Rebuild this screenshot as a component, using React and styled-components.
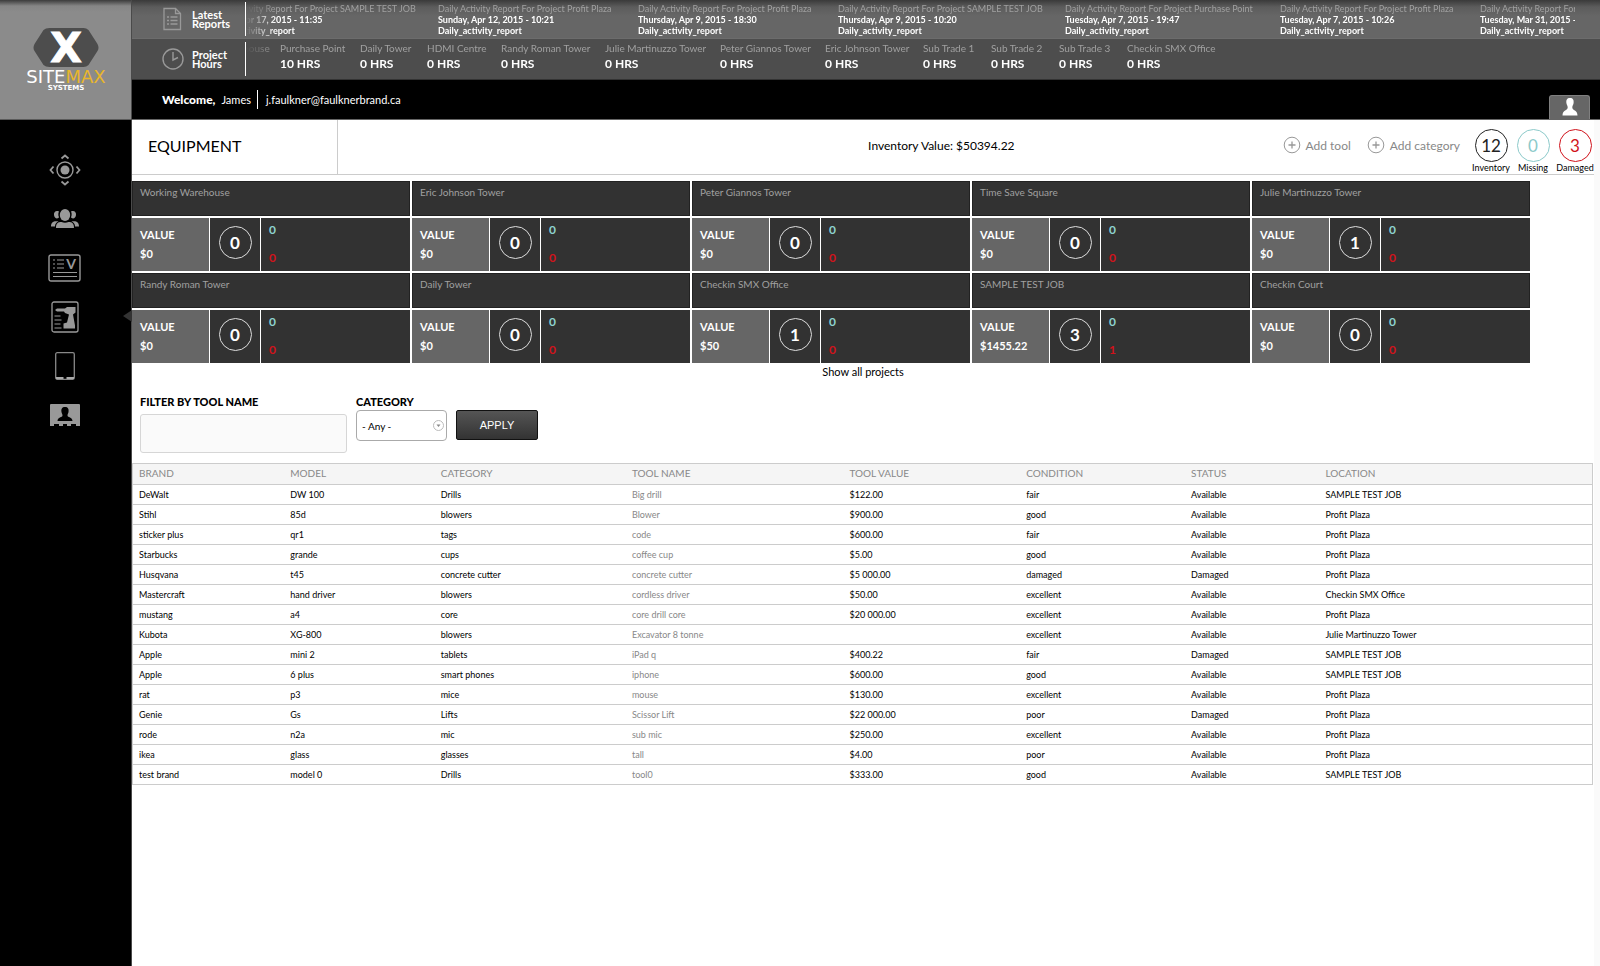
import { useState } from "react";
import styled, { createGlobalStyle, css } from "styled-components";

const GlobalStyle = createGlobalStyle`
* {
  box-sizing: border-box;
}
body {
  margin: 0;
  background: #fafafa;
  color: #000;
  font-family: Lato, "Open Sans", sans-serif;
  font-size: 12px;
}
button, input, select {
  font-family: inherit;
  margin: 0;
}
`

const Page = styled.div`
display: flex;
min-height: 100vh;
`

const Sidebar = styled.aside`
flex: none;
width: 132px;
background: #000;
border-right: 1px solid #4a4a4a;
`

const LogoBox = styled.a`
display: flex;
justify-content: center;
height: 120px;
padding-top: 24px;
background: linear-gradient(#3c3c3c, #868686 6px, #8b8b8b 12px);
border-bottom: 1px solid #5a5a5a;
`

const Nav = styled.nav`
display: flex;
flex-direction: column;
padding-top: 25px;
`

const NavLink = styled.a`
position: relative;
display: flex;
align-items: center;
justify-content: center;
height: 49px;
padding-right: 2px;
${props => props.$active && css`
  &::after {
    content: "";
    position: absolute;
    right: -1px;
    top: 18px;
    border: 6px solid transparent;
    border-right: 9px solid #333;
    border-left: 0;
  }
`}
`

const Main = styled.div`
flex: 1;
min-width: 0;
`

const Ticker = styled.section`
display: flex;
align-items: center;
height: ${props => props.$hours ? "41px" : "39px"};
padding: 0 25px 0 30px;
background: ${props => props.$hours
  ? "#4d4d4d"
  : "linear-gradient(#3a3a3a, #5c5c5c 7px, #666 16px)"};
border-bottom: 1px solid ${props => props.$hours ? "#333" : "#6c6c6c"};
`

const TickerTitle = styled.h2`
display: flex;
align-items: center;
flex: none;
width: 84px;
height: 34px;
margin: 0;
border-right: 1px solid #fff;
color: #fff;
font-size: 11px;
line-height: 9px;
svg {
  width: 22px;
  margin-right: 8px;
}
`

const TickerView = styled.div`
flex: 1;
min-width: 0;
overflow: hidden;
mask-image: linear-gradient(to right, transparent, #000 30px);
`

const TickerTrack = styled.ul`
display: flex;
margin: 0 0 0 ${props => props.$shift}px;
padding: 0 0 ${props => props.$hours ? "6px" : "0"};
list-style: none;
`

const TickerItem = styled.li`
flex: none;
width: ${props => props.$width}px;
white-space: nowrap;
color: #fff;
font-size: ${props => props.$hours ? "12px" : "9px"};
font-weight: bold;
line-height: ${props => props.$hours ? "16px" : "11px"};
span {
  display: block;
  color: #a0a0a0;
  font-size: ${props => props.$hours ? "10px" : "9px"};
  font-weight: normal;
}
`

const UserBar = styled.header`
display: flex;
align-items: center;
height: 40px;
padding: 0 10px 0 30px;
background: #000;
border-bottom: 1px solid #666;
color: #fff;
font-size: 11px;
strong {
  margin-right: 6px;
  font-size: 12px;
  font-weight: 900;
}
`

const UserMail = styled.span`
margin-left: 6px;
padding: 3px 0 3px 8px;
border-left: 1px solid #fff;
font-size: 11px;
`

const UserButton = styled.button`
align-self: flex-end;
display: flex;
justify-content: center;
align-items: flex-end;
width: 41px;
height: 24px;
margin-left: auto;
padding: 0 0 3px;
background: #666;
border: 1px solid #808080;
border-bottom: 0;
border-radius: 3px 3px 0 0;
cursor: pointer;
`

const Content = styled.main`
min-height: calc(100vh - 120px);
margin-right: 6px;
background: #fff;
`

const TitleBar = styled.div`
display: flex;
height: 55px;
border-bottom: 1px solid #ccc;
`

const PageTitle = styled.h1`
flex: none;
width: 206px;
margin: 0;
padding-left: 16px;
border-right: 1px solid #ccc;
font-size: 16px;
font-weight: normal;
line-height: 52px;
`

const InventoryValue = styled.p`
flex: 1;
margin: 0;
padding-right: 268px;
text-align: right;
font-size: 12px;
line-height: 52px;
`

const TitleActions = styled.div`
display: flex;
gap: 16px;
`

const AddButton = styled.button`
display: flex;
align-items: center;
gap: 5px;
height: 50px;
padding: 0;
background: none;
border: 0;
color: #888;
font-size: 12px;
cursor: pointer;
`

const Counters = styled.div`
display: flex;
gap: 4px;
margin-left: 12px;
`

const Counter = styled.div`
display: flex;
flex-direction: column;
align-items: center;
width: 38px;
padding-top: 9px;
color: ${props => props.$color};
b {
  width: 33px;
  height: 33px;
  border: 1px solid;
  border-radius: 50%;
  text-align: center;
  font-size: 17px;
  font-weight: normal;
  line-height: 31px;
}
span {
  color: #000;
  font-size: 9px;
  line-height: 12px;
}
`

const ProjectGrid = styled.div`
display: grid;
grid-template-columns: repeat(auto-fill, 278px);
gap: 2px;
margin-top: 6px;
`

const ProjectCard = styled.article`
display: grid;
grid-template-columns: 77px 50px 1fr;
grid-template-rows: 35px 53px;
gap: 2px 1px;
color: #fff;
`

const ProjectName = styled.h3`
grid-column: 1 / -1;
margin: 0;
padding: 3px 7px;
background: #323232;
border: 1px solid #222;
color: #a0a0a0;
font-size: 10px;
font-weight: normal;
line-height: 14px;
`

const ProjectValue = styled.div`
padding: 7px 8px;
background: #666;
font-size: 11px;
font-weight: bold;
line-height: 19px;
`

const ProjectCount = styled.div`
display: flex;
align-items: center;
justify-content: center;
background: #323232;
b {
  width: 33px;
  height: 33px;
  margin-bottom: 4px;
  border: 1px solid #ddd;
  border-radius: 50%;
  text-align: center;
  font-size: 17px;
  line-height: 31px;
}
`

const ProjectIssues = styled.div`
display: flex;
flex-direction: column;
justify-content: space-between;
padding: 4px 8px 5px;
background: #323232;
color: #8ed2cf;
font-size: 12px;
font-weight: bold;
line-height: 16px;
span + span {
  color: #d0121b;
}
`

const ShowAll = styled.a`
display: block;
color: #000;
text-align: center;
text-decoration: none;
font-size: 11px;
line-height: 18px;
`

const FilterForm = styled.form`
display: flex;
align-items: flex-start;
gap: 9px;
margin: 13px 8px 10px;
`

const Field = styled.div`
label {
  display: block;
  font-size: 11px;
  font-weight: 900;
  line-height: 16px;
}
`

const NameInput = styled.input`
display: block;
width: 207px;
height: 39px;
margin-top: 4px;
padding: 0 8px;
background: #fafafa;
border: 1px solid #d6d6d6;
border-radius: 3px;
`

const SelectWrap = styled.div`
position: relative;
svg {
  position: absolute;
  right: 3px;
  top: 10px;
  pointer-events: none;
}
`

const CategorySelect = styled.select`
appearance: none;
display: block;
width: 91px;
height: 31px;
padding: 0 5px;
background: #fff;
border: 1px solid #aaa;
border-radius: 4px;
color: #000;
font-size: 10px;
`

const ApplyButton = styled.button`
width: 82px;
height: 30px;
margin-top: 16px;
background: linear-gradient(#555, #333);
border: 1px solid #111;
border-radius: 2px;
color: #fff;
font-family: "Liberation Sans", Arial, sans-serif;
font-size: 11px;
cursor: pointer;
`

const ToolTable = styled.table`
width: calc(100% - 1px);
table-layout: fixed;
border-collapse: collapse;
border: 1px solid #ccc;
font-size: 9px;
th, td {
  height: 20px;
  padding: 0 6px;
  border-bottom: 1px solid #ccc;
  text-align: left;
  font-weight: normal;
  line-height: 12px;
  white-space: nowrap;
}
th {
  height: 21px;
  padding-bottom: 3px;
  background: #f5f5f5;
  color: #888;
  font-size: 10px;
}
td:nth-child(4) {
  color: #888;
}
`

const REPORTS = [
  { project: "SAMPLE TEST JOB", date: "Friday, Apr 17, 2015 - 11:35", width: 227 },
  { project: "Profit Plaza", date: "Sunday, Apr 12, 2015 - 10:21", width: 200 },
  { project: "Profit Plaza", date: "Thursday, Apr 9, 2015 - 18:30", width: 200 },
  { project: "SAMPLE TEST JOB", date: "Thursday, Apr 9, 2015 - 10:20", width: 227 },
  { project: "Purchase Point", date: "Tuesday, Apr 7, 2015 - 19:47", width: 215 },
  { project: "Profit Plaza", date: "Tuesday, Apr 7, 2015 - 10:26", width: 200 },
  { project: "Profit Plaza", date: "Tuesday, Mar 31, 2015 - 17:05", width: 200 },
]

const HOURS = [
  { name: "Working Warehouse", hours: 0, width: 100 },
  { name: "Purchase Point", hours: 10, width: 80 },
  { name: "Daily Tower", hours: 0, width: 67 },
  { name: "HDMI Centre", hours: 0, width: 74 },
  { name: "Randy Roman Tower", hours: 0, width: 104 },
  { name: "Julie Martinuzzo Tower", hours: 0, width: 115 },
  { name: "Peter Giannos Tower", hours: 0, width: 105 },
  { name: "Eric Johnson Tower", hours: 0, width: 98 },
  { name: "Sub Trade 1", hours: 0, width: 68 },
  { name: "Sub Trade 2", hours: 0, width: 68 },
  { name: "Sub Trade 3", hours: 0, width: 68 },
  { name: "Checkin SMX Office", hours: 0, width: 100 },
]

const PROJECTS = [
  { name: "Working Warehouse", value: "$0", count: 0, missing: 0, damaged: 0 },
  { name: "Eric Johnson Tower", value: "$0", count: 0, missing: 0, damaged: 0 },
  { name: "Peter Giannos Tower", value: "$0", count: 0, missing: 0, damaged: 0 },
  { name: "Time Save Square", value: "$0", count: 0, missing: 0, damaged: 0 },
  { name: "Julie Martinuzzo Tower", value: "$0", count: 1, missing: 0, damaged: 0 },
  { name: "Randy Roman Tower", value: "$0", count: 0, missing: 0, damaged: 0 },
  { name: "Daily Tower", value: "$0", count: 0, missing: 0, damaged: 0 },
  { name: "Checkin SMX Office", value: "$50", count: 1, missing: 0, damaged: 0 },
  { name: "SAMPLE TEST JOB", value: "$1455.22", count: 3, missing: 0, damaged: 1 },
  { name: "Checkin Court", value: "$0", count: 0, missing: 0, damaged: 0 },
]

const COLUMNS = [
  ["BRAND", "10.4%"],
  ["MODEL", "10.3%"],
  ["CATEGORY", "13.1%"],
  ["TOOL NAME", "14.9%"],
  ["TOOL VALUE", "12.1%"],
  ["CONDITION", "11.3%"],
  ["STATUS", "9.2%"],
  ["LOCATION", "18.7%"],
]

const TOOLS = [
  ["DeWalt", "DW 100", "Drills", "Big drill", "$122.00", "fair", "Available", "SAMPLE TEST JOB"],
  ["Stihl", "85d", "blowers", "Blower", "$900.00", "good", "Available", "Profit Plaza"],
  ["sticker plus", "qr1", "tags", "code", "$600.00", "fair", "Available", "Profit Plaza"],
  ["Starbucks", "grande", "cups", "coffee cup", "$5.00", "good", "Available", "Profit Plaza"],
  ["Husqvana", "t45", "concrete cutter", "concrete cutter", "$5 000.00", "damaged", "Damaged", "Profit Plaza"],
  ["Mastercraft", "hand driver", "blowers", "cordless driver", "$50.00", "excellent", "Available", "Checkin SMX Office"],
  ["mustang", "a4", "core", "core drill core", "$20 000.00", "excellent", "Available", "Profit Plaza"],
  ["Kubota", "XG-800", "blowers", "Excavator 8 tonne", "", "excellent", "Available", "Julie Martinuzzo Tower"],
  ["Apple", "mini 2", "tablets", "iPad q", "$400.22", "fair", "Damaged", "SAMPLE TEST JOB"],
  ["Apple", "6 plus", "smart phones", "iphone", "$600.00", "good", "Available", "SAMPLE TEST JOB"],
  ["rat", "p3", "mice", "mouse", "$130.00", "excellent", "Available", "Profit Plaza"],
  ["Genie", "Gs", "Lifts", "Scissor Lift", "$22 000.00", "poor", "Damaged", "Profit Plaza"],
  ["rode", "n2a", "mic", "sub mic", "$250.00", "excellent", "Available", "Profit Plaza"],
  ["ikea", "glass", "glasses", "tall", "$4.00", "poor", "Available", "Profit Plaza"],
  ["test brand", "model 0", "Drills", "tool0", "$333.00", "good", "Available", "SAMPLE TEST JOB"],
]

const CATEGORIES = ["Drills", "blowers", "tags", "cups", "concrete cutter", "core", "tablets", "smart phones", "mice", "Lifts", "mic", "glasses"]

function Logo() {
  return (
    <svg width="90" height="70" viewBox="-1 0 90 70">
      <path d="M20.500 4h41q3 0 5 2l9 14q2 4 0 7l-9 14q-2 2-5 2h-34q-4 0-6-2l-9-14q-2-3 0-7l9-14q2-2 6-2z" fill="#4d4d4d" />
      <text x="44" y="38" textAnchor="middle" fontFamily="DejaVu Sans" fontWeight="bold" fontSize="41" fill="#fff" stroke="#fff" strokeWidth="1">X</text>
      <text x="44" y="59" textAnchor="middle" fontFamily="DejaVu Sans" fontSize="18" fill="#fff">SITE<tspan fill="#e8b62c">MAX</tspan></text>
      <text x="44" y="66" textAnchor="middle" fontFamily="DejaVu Sans" fontWeight="bold" fontSize="7" fill="#fff">SYSTEMS</text>
    </svg>
  )
}

function TargetIcon() {
  return (
    <svg width="32" height="32" viewBox="0 0 32 32" fill="none" stroke="#999" strokeWidth="1.4">
      <circle cx="16" cy="16" r="8" />
      <circle cx="16" cy="16" r="4.5" fill="#999" stroke="none" />
      <path d="M12.5 4.5 16 1.5l3.500 3M12.500 27.500l3.500 3 3.500-3M4.500 12.500l-3 3.500 3 3.500M27.500 12.500l3 3.500-3 3.500" strokeWidth="1.800" />
    </svg>
  )
}

function PeopleIcon() {
  return (
    <svg width="28" height="20" viewBox="0 0 28 20" fill="#999">
      <path d="M8 2.500C5 1 2.500 3 3 6c.3 2 1.500 3.500 3 3.500 1 0 1.500-.5 2-1.200C7 6 7.200 4 8 2.500zM20 2.500c3-1.500 5.500.5 5 3.500-.3 2-1.500 3.500-3 3.500-1 0-1.500-.5-2-1.200 1-2.300.8-4.300 0-5.800z" />
      <ellipse cx="14" cy="6" rx="5.200" ry="6" />
      <path d="M7.500 12.500C3 11.500 0 13 0 17.500h4c0-2.500 1.200-4 3.500-5zM20.500 12.500C25 11.500 28 13 28 17.500h-4c0-2.500-1.200-4-3.500-5z" />
      <path d="M5 19c0-5 2-6 5.500-6 2.300 1 4.700 1 7 0 3.500 0 5.500 1 5.500 6z" />
    </svg>
  )
}

function ReportIcon() {
  return (
    <svg width="33" height="28" viewBox="0 0 33 28" fill="none" stroke="#999">
      <rect x="1" y="1" width="31" height="26" rx="2" strokeWidth="1.400" />
      <path d="M5 6h2M9 6h7M5 10h2M9 10h7M5 14h2M9 14h7M5 18.500h24M5 22.500h24" strokeWidth="1.200" />
      <text x="23" y="15" textAnchor="middle" fontFamily="Lato" fontWeight="bold" fontSize="14" fill="#999" stroke="none">V</text>
    </svg>
  )
}

function DrillIcon() {
  return (
    <svg width="28" height="32" viewBox="0 0 28 32" fill="none" stroke="#999">
      <rect x="1" y="1" width="26" height="30" rx="2" strokeWidth="1.300" />
      <path d="M4 9l2-1.500h8L16 6h8.500v5.500l-2.500 2 2 11v3H12.500v-5l3.500-1 2-8-4-1.500-1-1.500H6z" fill="#999" stroke="none" />
      <path d="M3.500 15h6M3.500 19h7M3.500 23h6M3.500 27h7" strokeWidth="1.200" />
    </svg>
  )
}

function TabletIcon() {
  return (
    <svg width="20" height="28" viewBox="0 0 20 28" fill="none" stroke="#888">
      <rect x="0.700" y="0.700" width="18.600" height="26.600" rx="1.500" strokeWidth="1.300" />
      <path d="M1 26h7.500M11.500 26H19" stroke="#aaa" strokeWidth="2" />
    </svg>
  )
}

function BadgeIcon() {
  return (
    <svg width="32" height="24" viewBox="0 0 32 24">
      <path d="M2 1h28q1 0 1 1v21h-4v-2h-5v2h-4v-2h-4v2h-4v-2H5v2H1V2q0-1 1-1z" fill="#999" />
      <path d="M16 4c3 0 4 2 3.500 5-.2 1.500-1 2-1 3.500 0 2 5 1.500 5 5.500h-15c0-4 5-3.500 5-5.500 0-1.500-.8-2-1-3.500C12 6 13 4 16 4z" fill="#000" />
    </svg>
  )
}

function DocIcon() {
  return (
    <svg height="24" viewBox="0 0 22 24" fill="none" stroke="#999" strokeWidth="1.300">
      <path d="M2 1.500h11.500l5 5V22.500H2z" />
      <path d="M13.500 1.500v5h5" />
      <path d="M5 10h2M5 13.500h2M5 17h2M8.500 10h7M8.500 13.500h7M8.500 17h7" />
    </svg>
  )
}

function ClockIcon() {
  return (
    <svg height="24" viewBox="0 0 22 24" fill="none" stroke="#999" strokeWidth="1.400">
      <circle cx="11" cy="12" r="10" />
      <path d="M11 5v8l5-2.500" />
    </svg>
  )
}

function UserIcon() {
  return (
    <svg width="16" height="18" viewBox="0 0 16 18">
      <path d="M8 0c3 0 4 2 3.600 5-.2 2-1.300 2.800-1.300 4.500 0 3 5.200 2.500 5.200 8H.5c0-5.500 5.200-5 5.200-8 0-1.700-1.100-2.500-1.300-4.500C4 2 5 0 8 0z" fill="#fff" />
    </svg>
  )
}

function PlusIcon() {
  return (
    <svg width="18" height="18" viewBox="0 0 18 18" fill="none" stroke="#999">
      <circle cx="9" cy="9" r="7.800" />
      <path d="M9 5.500v7M5.500 9h7" strokeWidth="1.300" />
    </svg>
  )
}

function App() {
  const [toolName, setToolName] = useState("");
  const [category, setCategory] = useState("");
  const [filter, setFilter] = useState({ name: "", category: "" });

  const handleSubmit = event => {
    event.preventDefault();
    setFilter({ name: toolName.toLowerCase(), category });
  }

  const tools = TOOLS.filter(tool =>
    tool[3].toLowerCase().includes(filter.name) && (!filter.category || tool[2] === filter.category)
  )

  return (
    <Page>
      <GlobalStyle />
      <Sidebar>
        <LogoBox href="#home" aria-label="Home"><Logo /></LogoBox>
        <Nav>
          <NavLink href="#sites" aria-label="Sites"><TargetIcon /></NavLink>
          <NavLink href="#people" aria-label="People"><PeopleIcon /></NavLink>
          <NavLink href="#reports" aria-label="Reports"><ReportIcon /></NavLink>
          <NavLink href="#equipment" aria-label="Equipment" $active><DrillIcon /></NavLink>
          <NavLink href="#devices" aria-label="Devices"><TabletIcon /></NavLink>
          <NavLink href="#contacts" aria-label="Contacts"><BadgeIcon /></NavLink>
        </Nav>
      </Sidebar>
      <Main>
        <Ticker>
          <TickerTitle><DocIcon />Latest<br />Reports</TickerTitle>
          <TickerView>
            <TickerTrack $shift={-35}>
              {REPORTS.map(report => (
                <TickerItem key={report.date} $width={report.width}>
                  <span>Daily Activity Report For Project {report.project}</span>
                  {report.date}<br />
                  Daily_activity_report
                </TickerItem>
              ))}
            </TickerTrack>
          </TickerView>
        </Ticker>
        <Ticker $hours>
          <TickerTitle><ClockIcon />Project<br />Hours</TickerTitle>
          <TickerView>
            <TickerTrack $shift={-66} $hours>
              {HOURS.map(item => (
                <TickerItem key={item.name} $width={item.width} $hours>
                  <span>{item.name}</span>
                  {item.hours} HRS
                </TickerItem>
              ))}
            </TickerTrack>
          </TickerView>
        </Ticker>
        <UserBar>
          <strong>Welcome,</strong>James
          <UserMail>j.faulkner@faulknerbrand.ca</UserMail>
          <UserButton aria-label="Account"><UserIcon /></UserButton>
        </UserBar>
        <Content>
          <TitleBar>
            <PageTitle>EQUIPMENT</PageTitle>
            <InventoryValue>Inventory Value: $50394.22</InventoryValue>
            <TitleActions>
              <AddButton><PlusIcon />Add tool</AddButton>
              <AddButton><PlusIcon />Add category</AddButton>
            </TitleActions>
            <Counters>
              <Counter $color="#222"><b>12</b><span>Inventory</span></Counter>
              <Counter $color="#8ccaca"><b>0</b><span>Missing</span></Counter>
              <Counter $color="#d0121b"><b>3</b><span>Damaged</span></Counter>
            </Counters>
          </TitleBar>
          <ProjectGrid>
            {PROJECTS.map(project => (
              <ProjectCard key={project.name}>
                <ProjectName>{project.name}</ProjectName>
                <ProjectValue>VALUE<br />{project.value}</ProjectValue>
                <ProjectCount><b>{project.count}</b></ProjectCount>
                <ProjectIssues>
                  <span>{project.missing}</span>
                  <span>{project.damaged}</span>
                </ProjectIssues>
              </ProjectCard>
            ))}
          </ProjectGrid>
          <ShowAll href="#projects">Show all projects</ShowAll>
          <FilterForm onSubmit={handleSubmit}>
            <Field>
              <label htmlFor="tool-name">FILTER BY TOOL NAME</label>
              <NameInput id="tool-name" value={toolName} onChange={event => setToolName(event.target.value)} />
            </Field>
            <Field>
              <label htmlFor="category">CATEGORY</label>
              <SelectWrap>
                <CategorySelect id="category" value={category} onChange={event => setCategory(event.target.value)}>
                  <option value="">- Any -</option>
                  {CATEGORIES.map(name => <option key={name} value={name}>{name}</option>)}
                </CategorySelect>
                <svg width="11" height="11" viewBox="0 0 11 11">
                  <circle cx="5.500" cy="5.500" r="5" fill="none" stroke="#bbb" />
                  <path d="M3.500 4.500h4l-2 2.500z" fill="#888" />
                </svg>
              </SelectWrap>
            </Field>
            <ApplyButton type="submit">APPLY</ApplyButton>
          </FilterForm>
          <ToolTable>
            <colgroup>
              {COLUMNS.map(([name, width]) => <col key={name} width={width} />)}
            </colgroup>
            <thead>
              <tr>{COLUMNS.map(([name]) => <th key={name}>{name}</th>)}</tr>
            </thead>
            <tbody>
              {tools.map((tool, i) => (
                <tr key={i}>{tool.map((cell, j) => <td key={j}>{cell}</td>)}</tr>
              ))}
            </tbody>
          </ToolTable>
        </Content>
      </Main>
    </Page>
  )
}

export default App;
